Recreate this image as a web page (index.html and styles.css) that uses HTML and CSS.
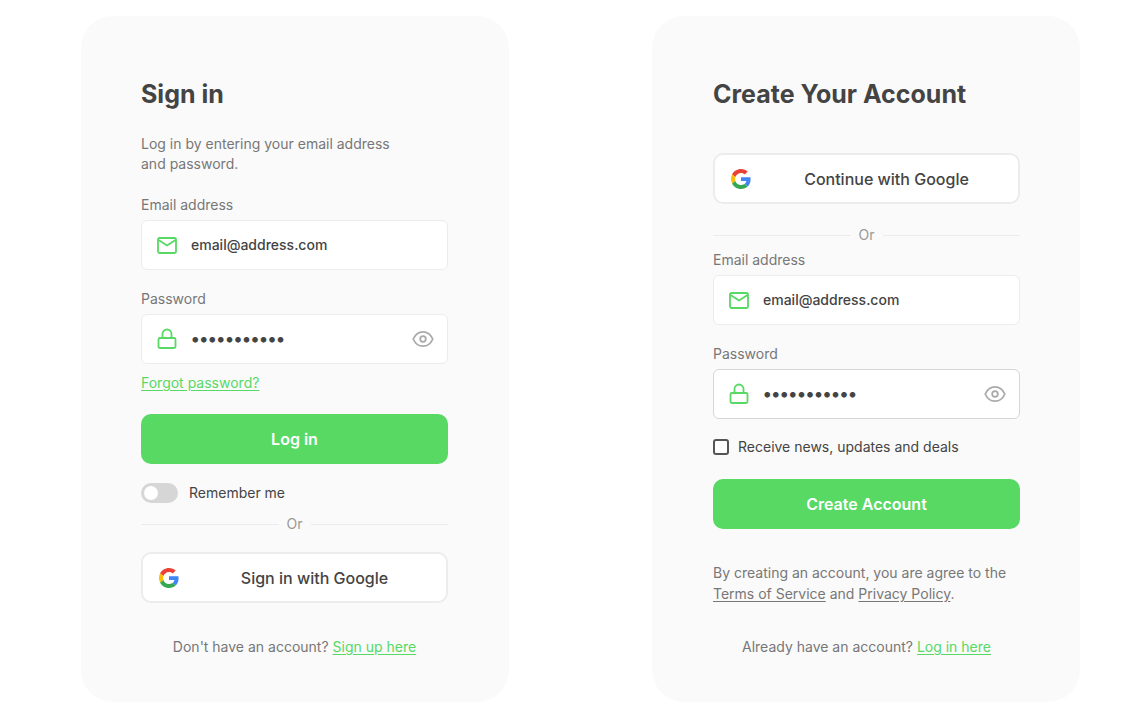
FILE: index.html
```html
<!DOCTYPE html>
<html lang="en">
<head>
<meta charset="utf-8">
<meta name="viewport" content="width=device-width, initial-scale=1">
<title>Sign in or create an account</title>
<link rel="stylesheet" href="styles.css">
</head>
<body>
<svg class="symbols" aria-hidden="true">
  <symbol id="mail" viewBox="0 0 22 22"><rect x="2" y="4" width="18" height="15" rx="1.500"/><path d="M2.500 6l8.500 5.500L19.500 6"/></symbol>
  <symbol id="lock" viewBox="0 0 22 22"><rect x="2.500" y="10" width="17" height="10" rx="1.500"/><path d="M6.500 10V6a4.500 4.500 0 0 1 9 0v4"/></symbol>
  <symbol id="eye" viewBox="0 0 22 22"><path d="M1.200 11C3.200 6.500 6.700 3.800 11 3.800S18.800 6.500 20.800 11c-2 4.500-5.500 7.200-9.800 7.200S3.200 15.500 1.200 11z"/><circle cx="11" cy="11" r="2.800"/></symbol>
  <symbol id="google" viewBox="0 0 48 48"><path fill="#ea4335" d="M24 9.500c3.540 0 6.710 1.220 9.210 3.600l6.850-6.850C35.900 2.380 30.470 0 24 0 14.620 0 6.510 5.380 2.560 13.220l7.980 6.190C12.430 13.720 17.740 9.500 24 9.500z"/><path fill="#4285f4" d="M46.980 24.550c0-1.570-.15-3.090-.38-4.550H24v9.020h12.940c-.58 2.960-2.260 5.480-4.780 7.180l7.730 6c4.510-4.180 7.090-10.360 7.090-17.650z"/><path fill="#fbbc05" d="M10.530 28.590c-.48-1.450-.76-2.990-.76-4.590s.27-3.140.76-4.590l-7.980-6.190C.92 16.460 0 20.120 0 24c0 3.880.92 7.540 2.560 10.780l7.970-6.190z"/><path fill="#34a853" d="M24 48c6.480 0 11.930-2.130 15.890-5.810l-7.730-6c-2.150 1.450-4.920 2.300-8.160 2.300-6.260 0-11.570-4.220-13.470-9.910l-7.980 6.190C6.510 42.620 14.620 48 24 48z"/></symbol>
</svg>
<main class="page">
  <form class="card">
    <h1 class="title">Sign in</h1>
    <p class="intro">Log in by entering your email address and password.</p>
    <div class="field">
      <label class="label" for="login-email">Email address</label>
      <div class="control">
        <svg class="icon"><use href="#mail"/></svg>
        <input class="input" id="login-email" type="email" value="email@address.com">
      </div>
    </div>
    <div class="field">
      <label class="label" for="login-password">Password</label>
      <div class="control">
        <svg class="icon"><use href="#lock"/></svg>
        <input class="input password" id="login-password" type="password" value="password123">
        <button class="reveal" type="button" aria-label="Show password"><svg class="icon muted"><use href="#eye"/></svg></button>
      </div>
    </div>
    <a class="link forgot" href="#">Forgot password?</a>
    <button class="primary" type="submit">Log in</button>
    <label class="option remember"><input class="switch" type="checkbox" role="switch"><span>Remember me</span></label>
    <div class="divider">Or</div>
    <button class="google" type="button"><svg class="logo"><use href="#google"/></svg><span class="google-text">Sign in with Google</span></button>
    <p class="footer">Don't have an account? <a class="link" href="#">Sign up here</a></p>
  </form>

  <form class="card card-create">
    <h1 class="title">Create Your Account</h1>
    <button class="google google-first" type="button"><svg class="logo"><use href="#google"/></svg><span class="google-text">Continue with Google</span></button>
    <div class="divider divider-after">Or</div>
    <div class="field field-first">
      <label class="label" for="new-email">Email address</label>
      <div class="control">
        <svg class="icon"><use href="#mail"/></svg>
        <input class="input" id="new-email" type="email" value="email@address.com">
      </div>
    </div>
    <div class="field">
      <label class="label" for="new-password">Password</label>
      <div class="control active">
        <svg class="icon"><use href="#lock"/></svg>
        <input class="input password" id="new-password" type="password" value="password123">
        <button class="reveal" type="button" aria-label="Show password"><svg class="icon muted"><use href="#eye"/></svg></button>
      </div>
    </div>
    <label class="option news"><input class="check" type="checkbox"><span>Receive news, updates and deals</span></label>
    <button class="primary create" type="submit">Create Account</button>
    <p class="terms">By creating an account, you are agree to the <a class="plain-link" href="#">Terms of Service</a> and <a class="plain-link" href="#">Privacy Policy</a>.</p>
    <p class="footer">Already have an account? <a class="link" href="#">Log in here</a></p>
  </form>
</main>
</body>
</html>
```
FILE: styles.css
```css
* { box-sizing: border-box; }
body {
  margin: 0;
  background: #fff;
  color: #777;
  font: 400 14px/20px Inter, "Liberation Sans", sans-serif;
}
button, input { font: inherit; }
.symbols { position: absolute; width: 0; height: 0; }
.page {
  display: flex;
  gap: 143px;
  padding: 16px 46px 24px 81px;
}
.card {
  display: flex;
  flex: 1;
  flex-direction: column;
  min-width: 0;
  max-width: 428px;
  padding: 60px 61px 45px 60px;
  border-radius: 32px;
  background: #fafafa;
}
.card-create { padding-right: 60px; padding-left: 61px; }
.title {
  margin: 0;
  color: #444;
  font-size: 25px;
  font-weight: 700;
  line-height: 36px;
}
.intro { max-width: 270px; margin: 22px 0 0; }
.field { margin-top: 21px; }
.field + .field { margin-top: 19px; }
.field-first { margin-top: 5px; }
.label { display: block; margin-bottom: 5px; }
.control {
  display: flex;
  align-items: center;
  height: 50px;
  padding: 0 13px 0 14px;
  border: 1px solid #ececec;
  border-radius: 6px;
  background: #fff;
}
.active { border-color: #d6d6d6; }
.icon {
  flex: none;
  width: 22px;
  height: 22px;
  fill: none;
  stroke: #57d964;
  stroke-width: 1.8;
  stroke-linejoin: round;
  stroke-linecap: round;
}
.muted { display: block; stroke: #aaa; }
.input {
  flex: 1;
  min-width: 0;
  margin-left: 13px;
  padding: 0;
  border: 0;
  outline: 0;
  background: none;
  color: #444;
  font-weight: 500;
}
.password { font-size: 18px; font-weight: 700; }
.reveal { padding: 0; border: 0; background: none; }
.link { color: #57d964; }
.plain-link { color: inherit; }
.link, .plain-link { text-decoration: underline; text-underline-offset: 2px; }
.forgot { align-self: flex-start; margin-top: 9px; }
.primary {
  height: 50px;
  margin-top: 21px;
  border: 0;
  border-radius: 10px;
  background: #57d964;
  color: #fff;
  font-size: 16px;
  font-weight: 600;
}
.option { display: flex; align-items: center; color: #444; }
.remember { gap: 11px; margin-top: 19px; }
.switch {
  appearance: none;
  width: 37px;
  height: 20px;
  margin: 0;
  padding: 3px;
  border-radius: 10px;
  background: #d6d6d6;
}
.switch::before {
  content: "";
  display: block;
  width: 14px;
  height: 14px;
  border-radius: 50%;
  background: #fff;
}
.switch:checked::before { margin-left: auto; }
.divider {
  display: flex;
  align-items: center;
  gap: 8px;
  margin-top: 11px;
  color: #999;
}
.divider::before, .divider::after {
  content: "";
  flex: 1;
  height: 1px;
  background: #ececec;
}
.divider-after { margin-top: 21px; }
.google {
  display: flex;
  align-items: center;
  height: 51px;
  margin-top: 18px;
  padding: 0 16px;
  border: 2px solid #ececec;
  border-radius: 10px;
  background: #fff;
  color: #444;
  font-size: 16px;
  font-weight: 500;
}
.google-first { margin-top: 41px; }
.logo { width: 20px; height: 20px; }
.google-text { flex: 1; padding-left: 20px; text-align: center; }
.news { gap: 9px; margin-top: 18px; }
.check {
  appearance: none;
  width: 16px;
  height: 16px;
  margin: 0;
  border: 2px solid #555;
  border-radius: 3px;
  background: #fff;
}
.check:checked { background: #57d964; }
.create { margin-top: 22px; }
.terms { margin: 33px 0 0; line-height: 21px; }
.footer { margin: auto 0 0; padding-top: 33px; text-align: center; }
```
